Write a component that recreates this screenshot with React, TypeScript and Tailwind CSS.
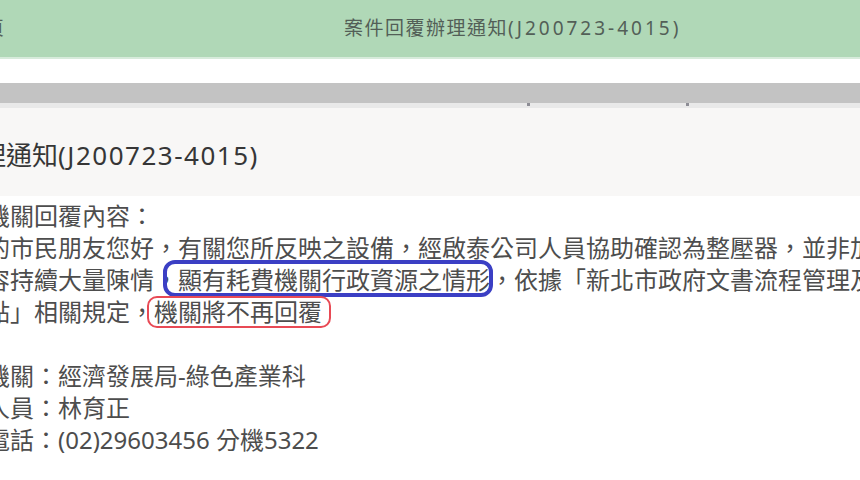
import React from "react";

const FONT = { fontFamily: '"Noto Sans", "Noto Sans CJK TC", sans-serif' };

export default function App() {
  return (
    <div className="w-[860px] h-[480px] overflow-hidden bg-white relative" style={FONT}>
      {/* green header */}
      <div className="h-[57px] bg-[#b0d8b7] flex items-center whitespace-nowrap relative">
        <div className="absolute left-[-53px] top-0 h-[57px] flex items-center text-[19px] text-[#55625a]">回首頁</div>
        <div className="pl-[344px] text-[19px] tracking-[1.5px] text-[#535f57]">
          案件回覆辦理通知<span className="tracking-[3px]">(J200723-4015)</span>
        </div>
      </div>
      <div className="h-[2px] bg-[#d7ebdb]" />
      <div className="h-[24px] bg-white" />
      <div className="h-[20px] bg-[#c3c3c3]" />
      <div className="h-[5px] bg-[#e9e9e9] relative">
        <div className="absolute left-[527px] top-0 w-[3px] h-[3px] bg-[#8d8d95]" />
        <div className="absolute left-[686px] top-0 w-[3px] h-[3px] bg-[#8d8d95]" />
      </div>
      {/* heading */}
      <div className="h-[88px] bg-[#f8f7f6] pt-[30px] whitespace-nowrap">
        <div className="ml-[-150px] text-[26px] leading-[34px] text-[#363636]">
          案件回覆辦理通知<span className="tracking-[1.5px]">(J200723-4015)</span>
        </div>
      </div>
      {/* body */}
      <div className="relative pt-[4px] whitespace-nowrap text-[24px] leading-[32px] text-[#4d4d4d]">
        <div className="ml-[-14px]">
          <div>機關回覆內容：</div>
          <div>的市民朋友您好，有關您所反映之設備，經啟泰公司人員協助確認為整壓器，並非加壓馬達</div>
          <div>容持續大量陳情，顯有耗費機關行政資源之情形，依據「新北市政府文書流程管理及作業要點</div>
          <div>點」相關規定，機關將不再回覆</div>
          <div className="h-[32px]" />
          <div>機關：經濟發展局-綠色產業科</div>
          <div>人員：林育正</div>
          <div>電話：(02)29603456 分機5322</div>
        </div>
        <div className="absolute left-[163px] top-[64px] w-[330px] h-[37px] border-[4px] border-[#3b3fc4] rounded-[12px]" />
        <div className="absolute left-[147px] top-[100px] w-[184px] h-[32px] border-2 border-[#e84a55] rounded-[10px]" />
      </div>
    </div>
  );
}
